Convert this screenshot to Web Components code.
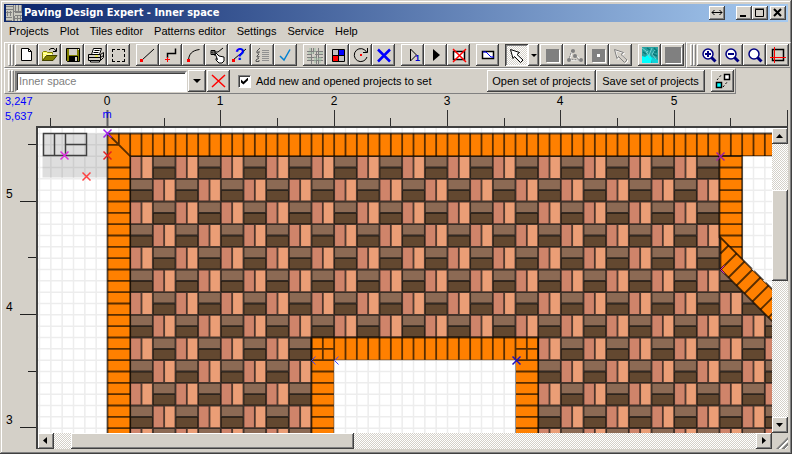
<!DOCTYPE html>
<html lang="en">
<head>
<meta charset="utf-8">
<title>Paving Design Expert - Inner space</title>
<style>
html, body { margin: 0; height: 100%; }
body { font: 11px/14px "Liberation Sans", Arial, sans-serif; color: #000; background: #d4d0c8; }
</style>
</head>
<body>
<paving-app></paving-app>
<script>
const RAISED = 'box-shadow: inset -1px -1px #404040, inset 1px 1px #fff, inset -2px -2px #808080;';
const BUTTON = `button { font: inherit; color: inherit; background: #d4d0c8; border: 0; margin: 0; padding: 0; ${RAISED} }`;

function define(name, html, setup) {
  const template = document.createElement('template');
  template.innerHTML = html;
  customElements.define(name, class extends HTMLElement {
    constructor() {
      super();
      this.attachShadow({ mode: 'open' }).append(template.content.cloneNode(true));
    }
    connectedCallback() { if (setup) setup(this, this.shadowRoot); }
  });
}

const lens = '<circle cx="11" cy="10" r="5" fill="#fff" stroke="#000080" stroke-width="1.5"/><path d="M14.5 13.5l4 4" stroke="#000080" stroke-width="3"/>';
const pointer = 'M5.5 5.5l9 3-2.500 2 6 5.500-2.500 2.500-6-6-1.500 2z';
const disabledPointer = `<path d="${pointer}" transform="translate(1 1)" fill="none" stroke="#fff"/><path d="${pointer}" fill="none" stroke="#808080"/>`;

const ICONS = {
  new: '<path d="M6.500 4.500h7l3 3v9h-10z" fill="#fff" stroke="#000"/><path d="M13.500 4.500v3h3" fill="none" stroke="#000"/>',
  open: '<path d="M4.500 17V8.500l1-1h3l1 1h5v3" fill="#ff6" stroke="#808000"/><path d="M6 9v6M8 9v5M10 10v2M12 10v2M14 10v1" stroke="#fff" stroke-dasharray="1 1"/><path d="M4.500 16.500l4-5h10.500l-4 5z" fill="#808000" stroke="#404000"/><path d="M11 6l2-1.500h3l2 2.500M18.500 4v3.500H15" fill="none" stroke="#000"/>',
  save: '<path d="M5.500 4.500h13v13h-12l-1-1z" fill="#808000" stroke="#000"/><path d="M8 5h8v6H8z" fill="#d4d0c8"/><path d="M8 12h9v5H8z" fill="#000"/><path d="M14 13h2v4h-2z" fill="#d4d0c8"/><path d="M17 5h1v1h-1z" fill="#fff"/>',
  print: '<path d="M7.500 10.500l2-6h8l-2 6z" fill="#fff" stroke="#000"/><path d="M10.500 6.500h5M9.500 8.500h5" stroke="#000"/><path d="M4.500 10.500h12l3-2v5l-3 3h-12z" fill="#d4d0c8" stroke="#000"/><path d="M4.500 13.500h12v3M16.500 10.500v3l3-2" fill="none" stroke="#000"/><path d="M11 12h3" stroke="#ff0" stroke-width="1"/><path d="M6.500 16.500h9v1.500h-9z" fill="#fff" stroke="#000"/>',
  select: '<path d="M5.500 5v12.500M17.500 5v12.500M5 5.500h13M5 17.500h13" stroke="#000" stroke-dasharray="3 2"/>',
  line: '<path d="M6 16L18 5" stroke="#000"/><path d="M4 15h3v3H4z" fill="red"/>',
  poly: '<path d="M8.500 14v-4.500h8V4.500" fill="none" stroke="#000" stroke-width="1.500"/><path d="M6 15.500h5M8.500 13v5" stroke="red"/>',
  arc: '<path d="M6.500 16C7 10 10 6.500 17.500 5.500" fill="none" stroke="#000"/><path d="M5 15h3v3H5z" fill="red"/>',
  pick: '<path d="M18 4l-5 4H6.500l4 4M6 6.500h4v4H6z" fill="none" stroke="#000"/><path d="M10 9.500l2.500 6-1.500-1 0 1.500 3 3h3l2-2v-4l-5-1-3-3z" fill="#fff" stroke="#000"/>',
  query: '<path d="M5 16L18 5" stroke="#000"/><path d="M4 15h3v3H4z" fill="red"/><text x="7" y="16" font-size="16" font-weight="bold" fill="blue">?</text>',
  list: '<path d="M11 6.500h7M11 8.500h7M11 10.500h7M11 12.500h7M11 14.500h7M11 16.500h7" stroke="#909090"/><path d="M9 4L6 7v2h2V7M8 10l-2 2v1h2v-1M8 14l-3 2v1.500h3V16" fill="none" stroke="#505050"/>',
  check: '<path d="M6 12l4 4 6-10.500" fill="none" stroke="#0080d0" stroke-width="1.5"/>',
  weave: '<path d="M4 7.500h16M4 10.500h5M12 10.500h8M4 13.500h9M15 13.500h5M4 16.500h16M8.500 4v16M10.500 4v6M13.500 8v12M15.500 4v16" stroke="#808080"/><path d="M5 9h6M13 15h6M5 15h3M12 4v4M12 12v7M16 9h4M7 4v3M17 13v6" stroke="#9fc0a6"/>',
  colors: '<path d="M6.500 5.500h12v12h-12z" fill="#c0c0c0" stroke="#000"/><path d="M13 6h5v5h-5z" fill="#00f"/><path d="M7 12h5v5H7z" fill="red"/><path d="M12.500 5v13M6 11.500h13" stroke="#000"/>',
  rotate: '<path d="M17.500 8A6.500 6.500 0 1 0 18 13" fill="none" stroke="#000"/><path d="M18.500 4v4.500H14" fill="none" stroke="#000"/><path d="M11 10h2v2h-2z" fill="red"/>',
  cross: '<path d="M6 5.500l12 12M18 5.500l-12 12" stroke="#00f" stroke-width="2.500"/>',
  step: '<path d="M9.500 5v12l6-6z" fill="none" stroke="#000"/><text x="14" y="17" font-size="9" font-weight="bold" fill="#00c">1</text>',
  play: '<path d="M9 5v12l7-6z" fill="#000"/>',
  erase: '<path d="M6.500 7.500h11v8h-11z" fill="#fff" stroke="#000" stroke-width="1.500"/><path d="M6 5l13 13M19 5L6 18" stroke="red" stroke-width="1.500"/>',
  area: '<path d="M6.500 7.500h11v7h-11z" fill="#fff" stroke="#000" stroke-width="1.500"/><path d="M7 8h3l5 5h3" fill="none" stroke="#00f"/>',
  arrow: `<path d="${pointer}" fill="#fff" stroke="#000"/>`,
  square: '<path d="M7 6h13v13H7z" fill="#fff"/><path d="M6 5h13v13H6z" fill="#808080"/>',
  nodes: '<path d="M9 8l-2 8 10 0M12 11l5 4" fill="none" stroke="#fff"/><path d="M9 6l-3 9 10 1-5-6" fill="none" stroke="#808080" stroke-dasharray="2 1"/><g fill="#808080"><circle cx="10" cy="7" r="2"/><circle cx="6" cy="16" r="2"/><circle cx="12" cy="12" r="2"/><circle cx="18" cy="16" r="2"/></g>',
  hole: '<path d="M7 6h13v13H7z" fill="#fff"/><path d="M6 5h13v13H6z" fill="#808080"/><path d="M11 10h3v3h-3z" fill="#fff"/>',
  arrowOff: disabledPointer,
  image: '<path d="M4 3h16v16H4z" fill="#28a0a0"/><path d="M4 12l3 1 4-3 3 4-1 5H4z" fill="#0ff"/><path d="M14 13l6 3v3h-6z" fill="#10d0d8"/><path d="M4 4l4 3 4 7M14 4l-3 7M18 5l-4 5 4 5M7 10l3-3" fill="none" stroke="#70d0d0"/><path d="M9 4l3 2M16 4l3 3M15 10l4 2M5 8l3 2M16 8h3" stroke="#087878" stroke-width="1.500"/>',
  block: '<path d="M5 4h16v16H5z" fill="#fff"/><path d="M4 3h16v16H4z" fill="#808080"/>',
  zoomIn: lens + '<path d="M8 10h6M11 7v6" stroke="#000080" stroke-width="2"/>',
  zoomOut: lens + '<path d="M8 10h6" stroke="#000080" stroke-width="2"/>',
  zoom: lens,
  crop: '<path d="M6.500 5.500h11v11h-11z" fill="none" stroke="#000" stroke-width="1.500"/><path d="M8.500 3v16M4 13.500h16" stroke="red"/>',
  remove: '<path d="M5 5l13 12M18 5L5 17" stroke="red" stroke-width="1.500"/>',
  swap: '<path d="M13.500 4.500h5v5h-5z" fill="#fff" stroke="#000" stroke-width="1.500"/><path d="M5.500 12.500h5v5h-5z" fill="#0ff" stroke="#000" stroke-width="1.500"/><path d="M6 10l5-6M12 17l5-6" stroke="#000" stroke-dasharray="2 2"/>'
};

define('tool-button', `
<style>
:host { display: block; flex: none; width: 23px; height: 22px; }
${BUTTON}
button { display: block; width: 100%; height: 100%; }
:host([pressed]) button { background: repeating-conic-gradient(#fff 0 25%, #d4d0c8 0 50%) 0 0 / 2px 2px; box-shadow: inset 1px 1px #404040, inset -1px -1px #fff, inset 2px 2px #808080; }
svg { display: block; width: 23px; height: 22px; font-family: "Liberation Sans", sans-serif; }
</style>
<button type="button"></button>`, (host, root) => {
  const button = root.querySelector('button');
  button.setAttribute('aria-label', host.getAttribute('label'));
  button.innerHTML = `<svg viewBox="0 0 23 22" aria-hidden="true">${ICONS[host.getAttribute('icon')]}</svg>`;
});

define('text-button', `
<style>
:host { display: block; flex: none; width: 109px; height: 22px; }
${BUTTON}
button { width: 100%; height: 100%; white-space: nowrap; }
</style>
<button type="button"><slot></slot></button>`);

define('drop-button', `
<style>
:host { display: block; flex: none; width: 11px; height: 22px; }
:host([wide]) { width: 18px; }
${BUTTON}
button { display: grid; place-items: center; width: 100%; height: 100%; }
i { border: 4px solid transparent; border-top-color: #000; border-bottom: 0; }
:host(:not([wide])) i { border-width: 3px 3px 0; }
</style>
<button type="button" aria-label="Show list"><i></i></button>`);

define('tool-bar', `
<style>
:host { display: flex; box-sizing: border-box; height: 26px; border: 1px solid; border-color: #fff #808080 #808080 #fff; padding: 1px 1px 1px 3px; }
.grip { display: flex; flex: none; margin-right: 1px; }
.grip i { width: 3px; box-sizing: border-box; border: 1px solid; border-color: #fff #808080 #808080 #fff; }
</style>
<div class="grip"><i></i><i></i></div><slot></slot>`);

define('tool-group', `
<style>
:host { display: flex; flex: none; margin-right: 6px; }
:host([last]) { margin-right: 0; }
:host([tight]) { margin-right: 1px; }
</style><slot></slot>`);

define('title-bar', `
<style>
:host { display: flex; align-items: center; height: 18px; padding: 0 2px; color: #fff; background: linear-gradient(90deg, #0a246a, #a6caf0); }
.logo { width: 16px; height: 16px; margin-right: 2px; }
h1 { flex: 1; margin: 0; font: bold 11px/18px "DejaVu Sans Condensed", "Liberation Sans", sans-serif; white-space: nowrap; }
${BUTTON}
button { width: 16px; height: 14px; color: #000; }
button svg { display: block; width: 16px; height: 14px; fill: none; stroke: #000; }
.extra { margin-right: 11px; }
.close { margin-left: 2px; }
</style>
<svg class="logo" viewBox="0 0 16 16" aria-hidden="true"><path d="M0 0h16v16H0z" fill="#c8c8c0"/><path d="M0 1.500h7M0 4.500h7M9 7.500h7M9 10.500h7M0 12.500h6M0 15.500h6M9.500 0v6M12.500 0v6M15.500 0v6M1.500 6v5M4.500 6v5M7.500 0v16M8.500 11v5M11.500 11v5M14.500 11v5M0 7.500h6M7 6.500h9M7 13.500h9" stroke="#808080"/></svg>
<h1>Paving Design Expert - Inner space</h1>
<button class="extra" type="button" aria-label="Resize"><svg viewBox="0 0 16 14"><path d="M3 6.500h10M5.500 4L3 6.500 5.500 9M10.500 4L13 6.500 10.500 9"/></svg></button>
<button type="button" aria-label="Minimize"><svg viewBox="0 0 16 14"><path d="M4 10h6" stroke-width="2"/></svg></button>
<button type="button" aria-label="Maximize"><svg viewBox="0 0 16 14"><path d="M3.500 3.500h8v7h-8zM3 3h9"/></svg></button>
<button class="close" type="button" aria-label="Close"><svg viewBox="0 0 16 14"><path d="M4 3l7 7M11 3l-7 7" stroke-width="2"/></svg></button>`);

define('menu-bar', `
<style>
:host { display: block; height: 20px; }
nav { display: flex; gap: 11px; padding: 0 5px; }
button { font: inherit; line-height: 18px; color: inherit; background: none; border: 0; padding: 0; white-space: nowrap; }
</style>
<nav><button>Projects</button><button>Plot</button><button>Tiles editor</button><button>Patterns editor</button><button>Settings</button><button>Service</button><button>Help</button></nav>`);

define('set-controls', `
<style>
:host { display: flex; align-items: center; }
input[type=text] { box-sizing: border-box; width: 172px; height: 21px; margin: 0 1px 0 0; padding: 0 2px; font: inherit; color: #808080; background: #fff; border: 2px solid; border-color: #808080 #fff #fff #808080; outline: 0; box-shadow: inset 1px 1px #404040; }
.check { display: flex; align-items: center; gap: 5px; width: 248px; margin-left: 8px; margin-right: 1px; white-space: nowrap; }
input[type=checkbox] { appearance: none; flex: none; width: 13px; height: 13px; margin: 0; background: #fff; border: 1px solid; border-color: #808080 #fff #fff #808080; box-shadow: inset 1px 1px #404040; display: grid; place-items: center; }
input[type=checkbox]:checked::before { content: ""; width: 7px; height: 7px; background: #000; clip-path: polygon(0 30%, 35% 60%, 100% 0, 100% 40%, 35% 100%, 0 70%); }
tool-button { margin-left: 1px; }
.swap { margin-left: 6px; }
</style>
<input type="text" aria-label="Project" value="Inner space"><drop-button wide></drop-button>
<tool-button icon="remove" label="Remove project"></tool-button>
<label class="check"><input type="checkbox" checked>Add new and opened projects to set</label>
<text-button>Open set of projects</text-button><text-button>Save set of projects</text-button>
<tool-button class="swap" icon="swap" label="Swap"></tool-button>`);

define('scroll-bar', `
<style>
:host { display: flex; background: repeating-conic-gradient(#fff 0 25%, #d4d0c8 0 50%) 0 0 / 2px 2px; }
:host([vertical]) { flex-direction: column; }
${BUTTON}
button { flex: none; width: 16px; height: 16px; }
svg { display: block; width: 16px; height: 16px; }
.thumb { background: #d4d0c8; ${RAISED} }
</style>
<button type="button" aria-label="Scroll back"><svg viewBox="0 0 16 16"><path/></svg></button>
<div class="before"></div><div class="thumb"></div><div class="after"></div>
<button type="button" aria-label="Scroll forward"><svg viewBox="0 0 16 16"><path/></svg></button>`, (host, root) => {
  const shapes = host.hasAttribute('vertical') ? ['M4 10l3.500-4 3.500 4z', 'M4 6l3.500 4L11 6z'] : ['M9 4L5 7.500 9 11z', 'M6 4l4 3.500L6 11z'];
  root.querySelectorAll('path').forEach((p, i) => p.setAttribute('d', shapes[i]));
  const parts = host.getAttribute('parts').split(' ');
  ['.before', '.thumb', '.after'].forEach((s, i) => { root.querySelector(s).style.flex = parts[i] + ' 1 0'; });
});

/* Plan scale: one paving module (0.2 m) is MODULE pixels; five modules make a metre. */
const MODULE = 68 / 3, METRE = MODULE * 5, HALF = MODULE / 2;

/* Rulers are redrawn to cover exactly the length they have. */
define('ruler-top', `
<style>
:host { display: block; overflow: hidden; min-width: 0; }
svg { display: block; width: 100%; height: 32px; font: 12px "Liberation Sans", sans-serif; }
</style><svg></svg>`, (host, root) => {
  const draw = () => {
    const width = host.clientWidth;
    let out = '';
    for (let n = -1; 71 + n * METRE / 2 < width; n++) {
      const x = Math.round(71 + n * METRE / 2);
      const major = n % 2 === 0;
      out += `<path d="M${x}.5 ${major ? 16 : 24}V32" stroke="${n ? '#303030' : '#606060'}" stroke-width="${n ? 1 : 2}"/>`;
      if (major && x + 8 < width) out += `<text x="${x}" y="11" text-anchor="middle">${n / 2}</text>`;
    }
    root.querySelector('svg').innerHTML = out + '<text x="71" y="24" text-anchor="middle" font-size="11" fill="blue">m</text>';
  };
  new ResizeObserver(draw).observe(host);
});

define('ruler-left', `
<style>
:host { display: block; overflow: hidden; min-height: 0; }
svg { display: block; width: 32px; height: 100%; font: 12px "Liberation Sans", sans-serif; }
</style><svg></svg>`, (host, root) => {
  const draw = () => {
    let out = '';
    for (let n = 0; 18 + n * METRE / 2 < host.clientHeight; n++) {
      const y = Math.round(18 + n * METRE / 2);
      const major = n % 2 === 1;
      out += `<path d="M${major ? 16 : 24} ${y}.5H32" stroke="#202020"/>`;
      if (major) out += `<text x="2" y="${y - 3}">${5 - (n - 1) / 2}</text>`;
    }
    root.querySelector('svg').innerHTML = out;
  };
  new ResizeObserver(draw).observe(host);
});

define('plan-view', `
<style>
:host { display: block; overflow: hidden; background: #fff; }
svg { display: block; width: 100%; height: 100%; }
</style><svg role="img" aria-label="Paving plan"></svg>`, (host, root) => {
  const M = MODULE, H = HALF;
  const box = (x, y, w, h) => `M${x * M} ${y * M}h${w * M}v${h * M}h${-w * M}z`;
  let grid = '', paths = { '#cf846a': '', '#eb9e76': '', '#8c6a54': '', '#634830': '' }, seams = '';
  for (let i = -8; i < 160; i++) grid += `M${i * H} -10V1200M-80 ${i * H}H1800`;
  for (let r = 0; r < 40; r++) for (let c = 0; c < 70; c++) {
    const x = c + 1, y = r + 1;
    if ((r + c) % 2 === 0) {
      paths['#cf846a'] += box(x, y, .5, 1);
      paths['#eb9e76'] += box(x + .5, y, .5, 1);
      seams += `M${(x + .5) * M} ${y * M}v${M}`;
    } else {
      paths['#8c6a54'] += box(x, y, 1, .5);
      paths['#634830'] += box(x, y + .5, 1, .5);
      seams += `M${x * M} ${(y + .5) * M}h${M}`;
    }
    seams += `M${x * M} ${y * M}h${M}M${x * M} ${y * M}v${M}`;
  }
  let joints = '';
  for (let i = 2; i < 140; i++) joints += `M${i * H} 0v${M}`;
  for (let i = 3; i < 60; i++) joints += `M0 ${i * H}h${M}`;
  joints += `M${H} 0v${H}M0 ${H}h${H}M0 0L${M} ${M}`;
  let inner = '';
  for (let i = 18; i <= 38; i++) inner += `M${i * H} ${9 * M}v${M}`;
  inner += `M${9 * M} ${9.5 * M}h${M}M${18 * M} ${9.5 * M}h${M}`;
  for (let i = 20; i < 60; i++) inner += `M${9 * M} ${i * H}h${M}M${18 * M} ${i * H}h${M}`;
  let side = '';
  for (let i = 3; i < 10; i++) side += `M${27 * M} ${i * H}h${M}`;
  side += `M${27 * M + 8} ${10 * H}H${28 * M}`;
  let slant = 'M621 112l-8 8';
  for (let i = 0; i < 40; i++) slant += `M${629 + i * 8} ${120 + i * 8}l-16 16`;
  const cross = (x, y, colour) => `<path d="M${x - 4} ${y - 4}l8 8M${x + 4} ${y - 4}l-8 8" stroke="${colour}" stroke-width="1.500"/>`;
  const ink = 'stroke="#000" stroke-opacity=".65" stroke-width="1.800"';
  root.querySelector('svg').innerHTML = `<g transform="translate(69.5 5.5)" fill="none">
    <path d="${grid}" stroke="#ededed" stroke-width="1.500"/>
    <path d="M-65 0H0V44H-65z" fill="#000" fill-opacity=".13"/>
    <path d="M-64 0h43v22h-43zM-53 0v22M-42 0v22M-42 11h21" stroke="#404040" stroke-width="1.500"/>
    ${Object.entries(paths).map(([c, d]) => `<path d="${d}" fill="${c}"/>`).join('')}
    <path d="${seams}" ${ink}/>
    <path d="${box(0, 0, 80, 1)}${box(0, 1, 1, 60)}" fill="#ff8000"/>
    <path d="M0 1400V0H1900M${M} 1400V${M}H1900" ${ink}/><path d="${joints}" ${ink}/>
    <path d="M${28 * M} ${M}H1900V1420L${28 * M} 126z" fill="#fff"/>
    <path d="M${27 * M} ${M}h${M}v104l${-M} ${-M}z" fill="#ff8000" ${ink}/><path d="${side}" ${ink}/>
    <path d="M613 104l800 800v32L613 136z" fill="#ff8000" ${ink}/><path d="${slant}" ${ink}/>
    <path d="${box(9, 9, 10, 60)}" fill="#ff8000" ${ink}/><path d="${inner}" ${ink}/>
    <path d="${box(10, 10, 8, 60)}" fill="#fff" stroke="#404040"/>
    <clipPath id="open"><path d="M${28 * M + 1} ${M + 1}H1900V1386L${28 * M + 1} 127z${box(10, 10, 8, 50)}"/></clipPath>
    <path d="${grid}" stroke="#ededed" stroke-width="1.500" clip-path="url(#open)"/>
    ${cross(0, 0, '#a020f0')}${cross(0, 22, '#e02020')}${cross(-43, 22, '#e030e0')}${cross(-21, 43, '#ff4040')}
    ${cross(613, 23, '#a020a0')}${cross(409, 227, '#2010c0')}
    <path d="M617 132l-4 4 4 4" stroke="#d020d0"/><path d="M208 223l-4 4 4 4M231 223l-4 4 4 4" stroke="#4040ff"/>
  </g>`;
});

define('plan-workspace', `
<style>
:host { display: grid; grid-template: 32px 1fr / 32px 1fr; min-height: 0; }
.coords { color: #00f; line-height: 15px; padding-left: 1px; white-space: nowrap; }
.frame { display: grid; grid-template: 1fr 16px / 1fr 16px; min-height: 0; border: solid; border-width: 2px 0 0 2px; border-color: #404040; }
plan-view { min-height: 0; min-width: 0; }
.size { background: repeating-linear-gradient(135deg, #fff 0 1px, #d4d0c8 1px 2px, #808080 2px 4px); clip-path: polygon(100% 25%, 100% 100%, 25% 100%); }
</style>
<div class="coords"><div>3,247</div><div>5,637</div></div>
<ruler-top></ruler-top>
<ruler-left></ruler-left>
<div class="frame">
  <plan-view></plan-view><scroll-bar vertical parts="46 91 136"></scroll-bar>
  <scroll-bar parts="17 283 401"></scroll-bar><div class="size"></div>
</div>`);

define('paving-app', `
<style>
:host { display: grid; grid-template-rows: 18px 20px 26px 26px 1fr; box-sizing: border-box; height: 100vh; min-height: 240px; padding: 4px 4px 5px; background: #d4d0c8; overflow: hidden; box-shadow: inset -1px -1px #404040, inset 1px 1px #d4d0c8, inset -2px -2px #808080, inset 2px 2px #fff; }
.bars { display: flex; min-width: 0; }
.bars.first { justify-content: space-between; }
</style>
<title-bar></title-bar>
<menu-bar></menu-bar>
<div class="bars first">
  <tool-bar>
    <tool-group><tool-button icon="new" label="New"></tool-button><tool-button icon="open" label="Open"></tool-button><tool-button icon="save" label="Save"></tool-button><tool-button icon="print" label="Print"></tool-button><tool-button icon="select" label="Select area"></tool-button></tool-group>
    <tool-group><tool-button icon="line" label="Line"></tool-button><tool-button icon="poly" label="Polyline"></tool-button><tool-button icon="arc" label="Arc"></tool-button><tool-button icon="pick" label="Pick contour"></tool-button><tool-button icon="query" label="Contour info"></tool-button><tool-button icon="list" label="List"></tool-button><tool-button icon="check" label="Apply"></tool-button></tool-group>
    <tool-group><tool-button icon="weave" label="Pattern"></tool-button><tool-button icon="colors" label="Colours"></tool-button><tool-button icon="rotate" label="Rotate"></tool-button><tool-button icon="cross" label="Origin"></tool-button></tool-group>
    <tool-group><tool-button icon="step" label="Step"></tool-button><tool-button icon="play" label="Run"></tool-button><tool-button icon="erase" label="Clear"></tool-button></tool-group>
    <tool-group><tool-button icon="area" label="Area"></tool-button></tool-group>
    <tool-group tight><tool-button icon="arrow" label="Pointer" pressed></tool-button><drop-button></drop-button></tool-group>
    <tool-group><tool-button icon="square" label="Fill"></tool-button><tool-button icon="nodes" label="Nodes"></tool-button><tool-button icon="hole" label="Hole"></tool-button><tool-button icon="arrowOff" label="Move"></tool-button></tool-group>
    <tool-group last><tool-button icon="image" label="Texture"></tool-button><tool-button icon="block" label="Solid"></tool-button></tool-group>
  </tool-bar>
  <tool-bar>
    <tool-group last><tool-button icon="zoomIn" label="Zoom in"></tool-button><tool-button icon="zoomOut" label="Zoom out"></tool-button><tool-button icon="zoom" label="Zoom"></tool-button><tool-button icon="crop" label="Fit"></tool-button></tool-group>
  </tool-bar>
</div>
<div class="bars"><tool-bar><set-controls></set-controls></tool-bar></div>
<plan-workspace></plan-workspace>`);
</script>
</body>
</html>
